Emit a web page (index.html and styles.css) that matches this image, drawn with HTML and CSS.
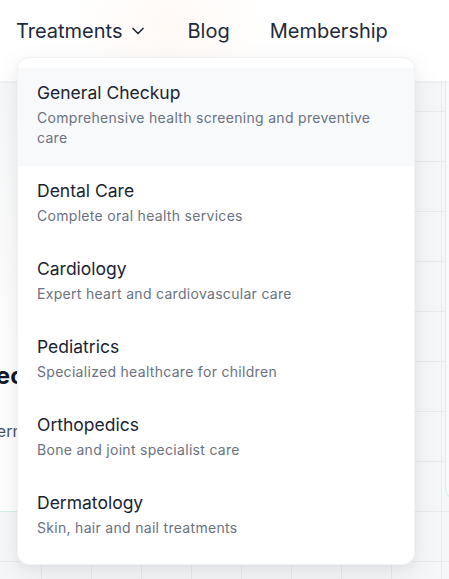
FILE: index.html
```html
<!DOCTYPE html>
<html lang="en">
<head>
<meta charset="utf-8">
<title>Treatments menu</title>
<link rel="stylesheet" href="styles.css">
</head>
<body>
<header class="site-header">
  <div class="glow"></div>
  <nav class="nav">
    <div class="nav-item">
      <span class="nav-link">Treatments
        <svg class="chev" viewBox="0 0 24 24" width="20" height="20" fill="none" stroke="currentColor" stroke-width="2" stroke-linecap="round" stroke-linejoin="round"><path d="m6 9 6 6 6-6"/></svg>
      </span>
      <div class="dropdown">
        <a class="dd-item active">
          <span class="dd-title">General Checkup</span>
          <span class="dd-desc">Comprehensive health screening and preventive care</span>
        </a>
        <a class="dd-item">
          <span class="dd-title">Dental Care</span>
          <span class="dd-desc">Complete oral health services</span>
        </a>
        <a class="dd-item">
          <span class="dd-title">Cardiology</span>
          <span class="dd-desc">Expert heart and cardiovascular care</span>
        </a>
        <a class="dd-item">
          <span class="dd-title">Pediatrics</span>
          <span class="dd-desc">Specialized healthcare for children</span>
        </a>
        <a class="dd-item">
          <span class="dd-title">Orthopedics</span>
          <span class="dd-desc">Bone and joint specialist care</span>
        </a>
        <a class="dd-item">
          <span class="dd-title">Dermatology</span>
          <span class="dd-desc">Skin, hair and nail treatments</span>
        </a>
      </div>
    </div>
    <a class="nav-link">Blog</a>
    <a class="nav-link">Membership</a>
  </nav>
</header>
<main class="hero">
  <section class="card card-left">
    <h2 class="card-title">Specialized Care</h2>
    <p class="card-text">Modern medical care for every stage of life.</p>
  </section>
  <section class="card card-right"></section>
</main>
</body>
</html>
```

FILE: styles.css
```css
* { box-sizing: border-box; }
html, body { margin: 0; padding: 0; }
body {
  width: 449px;
  height: 579px;
  overflow: hidden;
  font-family: "Inter", "DejaVu Sans", sans-serif;
  background: #f6f7f8;
  color: #1e2a3b;
}
.site-header {
  position: relative;
  z-index: 10;
  height: 81px;
  background: #ffffff;
  box-shadow: 0 1px 4px rgba(0,0,0,0.05);
}
.glow {
  position: absolute;
  left: 70px;
  top: -60px;
  width: 200px;
  height: 170px;
  background: radial-gradient(closest-side, rgba(255,225,205,0.18), rgba(255,235,222,0));
  pointer-events: none;
}
.nav {
  position: relative;
  display: flex;
  align-items: center;
  gap: 40px;
  padding: 17px 0 0 16px;
}
.nav-item { position: relative; }
.nav-link {
  display: flex;
  align-items: center;
  gap: 5px;
  font-size: 20px;
  line-height: 28px;
  color: #1e2a3b;
  text-decoration: none;
}
.chev { color: #1e2a3b; }
.dropdown {
  position: absolute;
  left: 1px;
  top: 40px;
  width: 398px;
  padding: 10px 0 8px;
  background: #ffffff;
  border: 1px solid #f1f2f4;
  border-radius: 12px;
  box-shadow: 0 10px 30px rgba(15,23,42,0.08), 0 3px 8px rgba(15,23,42,0.04);
}
.dd-item {
  display: flex;
  flex-direction: column;
  gap: 4px;
  padding: 14px 19px 18px;
  text-decoration: none;
}
.dd-item.active { background: #f8f9fb; }
.dd-title {
  font-size: 17.5px;
  line-height: 22px;
  color: #1a2332;
}
.dd-desc {
  font-size: 14px;
  line-height: 20px;
  letter-spacing: 0.3px;
  color: #6b7280;
  max-width: 345px;
}
.hero {
  display: flex;
  align-items: flex-start;
  height: 498px;
  background-color: #f6f7f8;
  background-image:
    linear-gradient(to right, #e8eaed 1px, transparent 1px),
    linear-gradient(to bottom, #e8eaed 1px, transparent 1px);
  background-size: 50px 50px;
  background-position: 41px 30px;
}
.card {
  border: 1px solid #d6f1e6;
  border-radius: 12px;
  background: #ffffff;
}
.card-left {
  margin-left: -60px;
  width: 380px;
  height: 431px;
  padding: 279px 24px 0;
  border-top: none;
  border-radius: 0 0 12px 12px;
  background: linear-gradient(to bottom, #f7f8f9, #ffffff 60%);
}
.card-title {
  margin: 0;
  font-size: 24px;
  line-height: 32px;
  font-weight: 700;
  color: #111827;
}
.card-text {
  margin: 27px 0 0 -2px;
  font-size: 16px;
  line-height: 24px;
  color: #475569;
}
.card-right {
  margin-left: auto;
  margin-right: -200px;
  width: 204px;
  height: 419px;
  border-top: none;
  border-radius: 0 0 12px 12px;
  background: #f9fafb;
}
```
